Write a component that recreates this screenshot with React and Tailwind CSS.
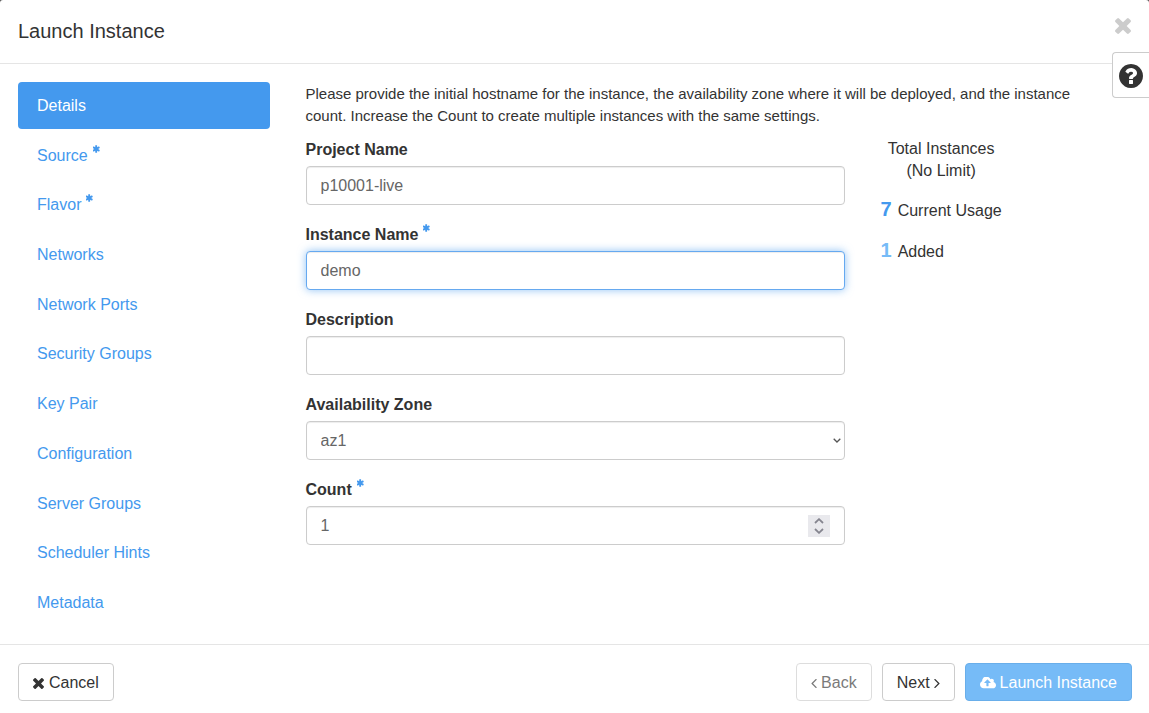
import React, { useState } from 'react';

const steps = [
  { name: 'Details' },
  { name: 'Source', required: true },
  { name: 'Flavor', required: true },
  { name: 'Networks' },
  { name: 'Network Ports' },
  { name: 'Security Groups' },
  { name: 'Key Pair' },
  { name: 'Configuration' },
  { name: 'Server Groups' },
  { name: 'Scheduler Hints' },
  { name: 'Metadata' },
];

const inputStyles =
  'block w-full h-[39px] px-[14px] rounded border border-[#ccc] bg-white text-[#666] shadow-[inset_0_1px_1px_rgba(0,0,0,0.075)] outline-none';

const Icon = ({ d, viewBox = '0 0 1792 1792', className }) => (
  <svg viewBox={viewBox} className={className} fill="currentColor" aria-hidden="true">
    <path d={d} />
  </svg>
);

const TIMES =
  'M1490 1322q0 40-28 68l-136 136q-28 28-68 28t-68-28l-294-294-294 294q-28 28-68 28t-68-28l-136-136q-28-28-28-68t28-68l294-294-294-294q-28-28-28-68t28-68l136-136q28-28 68-28t68 28l294 294 294-294q28-28 68-28t68 28l136 136q28 28 28 68t-28 68l-294 294 294 294q28 28 28 68z';
const ASTERISK =
  'M1482 1050q46 26 59.5 77.5t-12.5 97.5l-64 110q-26 46-77.5 59.5t-97.5-12.5l-266-153v307q0 52-38 90t-90 38h-128q-52 0-90-38t-38-90v-307l-266 153q-46 26-97.5 12.5t-77.5-59.5l-64-110q-26-46-12.5-97.5t59.5-77.5l266-154-266-154q-46-26-59.5-77.5t12.5-97.5l64-110q26-46 77.5-59.5t97.5 12.5l266 153v-307q0-52 38-90t90-38h128q52 0 90 38t38 90v307l266-153q46-26 97.5-12.5t77.5 59.5l64 110q26 46 12.5 97.5t-59.5 77.5l-266 154z';
const QUESTION =
  'M1024 1376v-192q0-14-9-23t-23-9h-192q-14 0-23 9t-9 23v192q0 14 9 23t23 9h192q14 0 23-9t9-23zm256-672q0-88-55.5-163t-138.5-116-170-41q-243 0-371 213-15 24 8 42l132 100q7 6 19 6 16 0 25-12 53-68 86-92 34-24 86-24 48 0 85.5 26t37.5 59q0 38-20 61t-68 45q-63 28-115.5 86.5t-52.5 125.5v36q0 14 9 23t23 9h192q14 0 23-9t9-23q0-19 21.5-49.5t54.5-49.5q32-18 49-28.5t46-35 44.5-48 28-60.5 12.5-81zm384 192q0 209-103 385.5t-279.5 279.5-385.5 103-385.5-103-279.5-279.5-103-385.5 103-385.5 279.5-279.5 385.5-103 385.5 103 279.5 279.5 103 385.5z';
const CLOUD_UPLOAD =
  'M1216 864q0-14-9-23l-352-352q-9-9-23-9t-23 9l-351 351q-10 12-10 24 0 14 9 23t23 9h224v352q0 13 9.5 22.5t22.5 9.5h192q13 0 22.5-9.5t9.5-22.5v-352h224q13 0 22.5-9.5t9.5-22.5zm640 288q0 159-112.5 271.5t-271.5 112.5h-1088q-185 0-316.5-131.5t-131.5-316.5q0-130 70-240t188-165q-2-30-2-43 0-212 150-362t362-150q156 0 285.5 87t188.5 231q71-62 166-62 106 0 181 75t75 181q0 76-41 138 130 31 213.5 135.5t83.5 238.5z';
const ANGLE_LEFT =
  'M1203 544q0 13-10 23l-393 393 393 393q10 10 10 23t-10 23l-50 50q-10 10-23 10t-23-10l-466-466q-10-10-10-23t10-23l466-466q10-10 23-10t23 10l50 50q10 10 10 23z';
const ANGLE_RIGHT =
  'M1171 960q0 13-10 23l-466 466q-10 10-23 10t-23-10l-50-50q-10-10-10-23t10-23l393-393-393-393q-10-10-10-23t10-23l50-50q10-10 23-10t23 10l466 466q10 10 10 23z';

const Required = () => (
  <Icon d={ASTERISK} viewBox="192 128 1408 1536" className="w-[7px] h-2 mb-[14px] ml-[5px] text-[#4499ee]" />
);

const Field = ({ id, label, required, children }) => (
  <div className="mb-[19px]">
    <label htmlFor={id} className="flex items-center w-fit mb-[5px] font-bold">
      {label}
      {required && <Required />}
    </label>
    {children}
  </div>
);

const App = () => {
  const [active, setActive] = useState('Details');
  const [count, setCount] = useState(1);

  return (
    <div className="min-h-screen bg-[#555]">
      <div className="relative min-h-screen rounded-t-[3px] bg-white text-[#333] text-base leading-[22px] font-['Helvetica_Neue','Liberation_Sans',Arial,sans-serif]">
        {/* Header */}
        <header className="flex items-start justify-between h-16 px-[18px] pt-[18px] border-b border-[#e5e5e5]">
          <h1 className="text-xl leading-[26px]">Launch Instance</h1>
          <button type="button" aria-label="Close" className="text-[#ccc]">
            <Icon d={TIMES} viewBox="302 366 1188 1188" className="w-4 h-4" />
          </button>
        </header>

        {/* Help toggle, pinned over the right edge */}
        <button
          type="button"
          aria-label="Help"
          className="absolute right-0 top-[52px] flex items-center justify-center w-[37px] h-[46px] pt-0.5 rounded-l border border-r-0 border-[#ccc] bg-white"
        >
          <Icon d={QUESTION} viewBox="128 128 1536 1536" className="w-6 h-6" />
        </button>

        {/* Body */}
        <main className="grid grid-cols-12 gap-x-9 py-[18px] pl-[18px] pr-[17px]">
          <nav className="col-span-3 grid auto-rows-fr gap-[3px] h-[544px]">
            {steps.map((step) => (
              <a
                key={step.name}
                href="#"
                onClick={(e) => {
                  e.preventDefault();
                  setActive(step.name);
                }}
                className={`flex items-center px-[19px] pt-px rounded ${
                  active === step.name ? 'bg-[#4499ee] text-white' : 'text-[#4499ee]'
                }`}
              >
                {step.name}
                {step.required && <Required />}
              </a>
            ))}
          </nav>

          <section className="col-span-9">
            <p className="mt-px mb-[11px] pr-6 text-[15px] leading-[22px]">
              Please provide the initial hostname for the instance, the availability zone where it will be
              deployed, and the instance count. Increase the Count to create multiple instances with the same
              settings.
            </p>
            <div className="grid grid-cols-3 gap-x-9">
              <form className="col-span-2 pt-px">
                <Field id="project" label="Project Name">
                  <input id="project" type="text" defaultValue="p10001-live" readOnly className={inputStyles} />
                </Field>
                <Field id="name" label="Instance Name" required>
                  <input
                    id="name"
                    type="text"
                    defaultValue="demo"
                    className="block w-full h-[39px] px-[14px] rounded border border-[#66a9f0] bg-white text-[#666] shadow-[inset_0_1px_1px_rgba(0,0,0,0.075),0_0_8px_rgba(68,153,238,0.6)] outline-none"
                  />
                </Field>
                <Field id="description" label="Description">
                  <input id="description" type="text" className={inputStyles} />
                </Field>
                <Field id="zone" label="Availability Zone">
                  <div className="relative">
                    <select id="zone" className={`${inputStyles} appearance-none`}>
                      <option>az1</option>
                    </select>
                    <svg
                      viewBox="0 0 8 5"
                      className="absolute right-1 top-[17px] w-2 h-[5px] text-[#555] pointer-events-none"
                      fill="none"
                      stroke="currentColor"
                      strokeWidth="1.3"
                    >
                      <path d="M0.7 0.7 4 4 7.3 0.7" />
                    </svg>
                  </div>
                </Field>
                <Field id="count" label="Count" required>
                  <div className="flex items-center h-[39px] px-[14px] rounded border border-[#ccc] shadow-[inset_0_1px_1px_rgba(0,0,0,0.075)]">
                    <input
                      id="count"
                      type="number"
                      min="1"
                      value={count}
                      onChange={(e) => setCount(Number(e.target.value))}
                      className="flex-1 min-w-0 text-[#666] outline-none [appearance:textfield]"
                    />
                    <div className="flex flex-col w-[22px] h-[22px] bg-[#e9e9ed] text-[#85858f]">
                      <button
                        type="button"
                        aria-label="Increase"
                        className="flex flex-1 items-end justify-center pb-0.5"
                        onClick={() => setCount(count + 1)}
                      >
                        <svg viewBox="0 0 10 6" className="w-[10px] h-[6px]" fill="none" stroke="currentColor" strokeWidth="1.8">
                          <path d="M1 5 5 1.2 9 5" />
                        </svg>
                      </button>
                      <button
                        type="button"
                        aria-label="Decrease"
                        className="flex flex-1 items-start justify-center pt-0.5"
                        onClick={() => setCount(Math.max(1, count - 1))}
                      >
                        <svg viewBox="0 0 10 6" className="w-[10px] h-[6px]" fill="none" stroke="currentColor" strokeWidth="1.8">
                          <path d="M1 1 5 4.8 9 1" />
                        </svg>
                      </button>
                    </div>
                  </div>
                </Field>
              </form>

              {/* Quota */}
              <div className="w-fit">
                <div className="text-center">
                  Total Instances
                  <br />
                  (No Limit)
                </div>
                <div className="flex items-baseline gap-[6px] mt-4">
                  <span className="text-xl leading-[22px] font-bold text-[#4499ee]">7</span>
                  Current Usage
                </div>
                <div className="flex items-baseline gap-[6px] mt-[17px]">
                  <span className="text-xl leading-[22px] font-bold text-[#76bbf7]">1</span>
                  Added
                </div>
              </div>
            </div>
          </section>
        </main>

        {/* Footer */}
        <footer className="flex items-center justify-between py-[18px] pl-[18px] pr-[17px] border-t border-[#e5e5e5]">
          <button type="button" className="flex items-center gap-[5px] h-[38px] px-[14px] pt-0.5 rounded border border-[#ccc]">
            <Icon d={TIMES} viewBox="302 366 1188 1188" className="w-[11px] h-[11px]" />
            Cancel
          </button>
          <div className="flex gap-[10px]">
            <button
              type="button"
              disabled
              className="flex items-center gap-1 h-[38px] px-[14px] pt-0.5 rounded border border-[#ccc] opacity-65"
            >
              <Icon d={ANGLE_LEFT} viewBox="582 480 640 960" className="w-[6px] h-[9px]" />
              Back
            </button>
            <button type="button" className="flex items-center gap-1 h-[38px] px-[14px] pt-0.5 rounded border border-[#ccc]">
              Next
              <Icon d={ANGLE_RIGHT} viewBox="570 480 640 960" className="w-[6px] h-[9px]" />
            </button>
            <button
              type="button"
              disabled
              className="flex items-center gap-1 h-[38px] px-[14px] pt-0.5 rounded border border-[#69aeea] bg-[#76bbf7] text-white"
            >
              <Icon d={CLOUD_UPLOAD} viewBox="-64 256 1920 1280" className="w-4 h-3" />
              Launch Instance
            </button>
          </div>
        </footer>
      </div>
    </div>
  );
};

export default App;
